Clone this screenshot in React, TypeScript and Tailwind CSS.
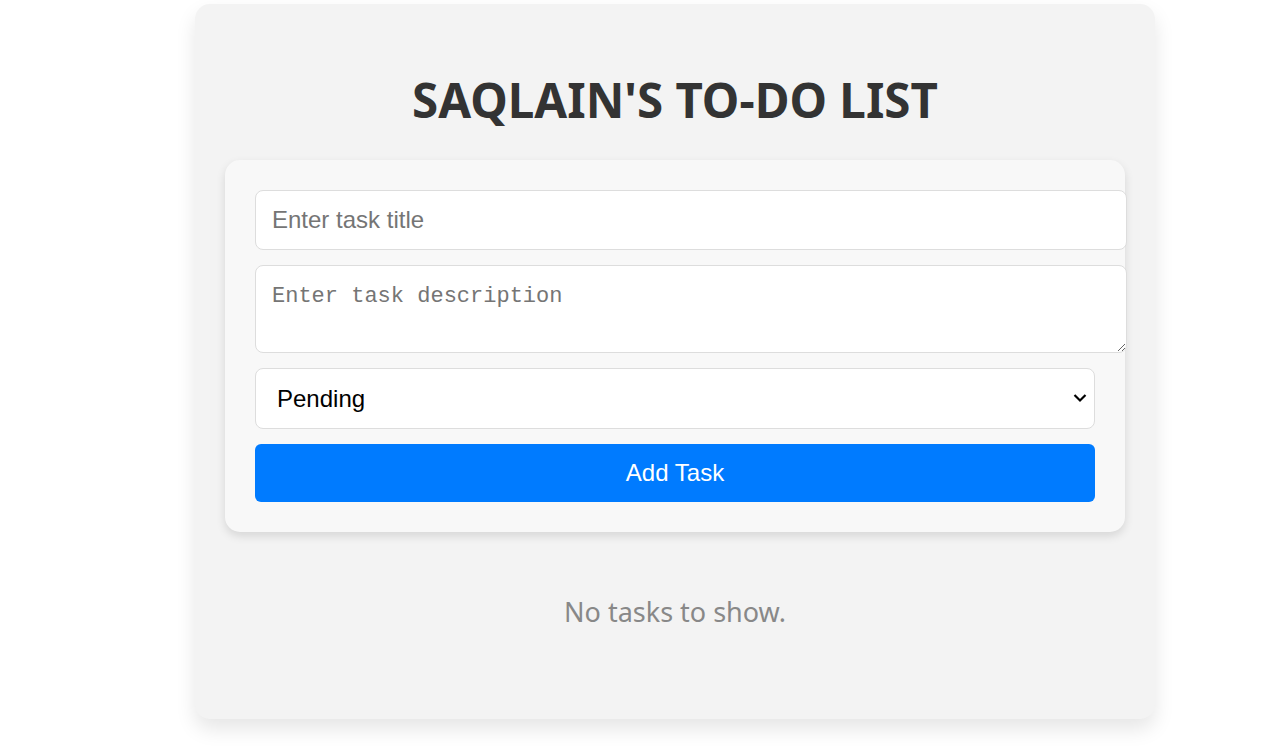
import { useState } from "react";

export default function App() {
  const [title, setTitle] = useState("");
  const [desc, setDesc] = useState("");
  const [status, setStatus] = useState("Pending");

  return (
    <div className="min-h-screen bg-white pt-[4px] pl-[195px]">
      <div className="w-[960px] rounded-[15px] bg-[#f3f3f3] px-[30px] pt-[30px] pb-[30px] shadow-[0_10px_20px_rgba(0,0,0,0.1)]">
        {/* Heading */}
        <div className="flex h-[126px] items-center justify-center pt-[5px]">
          <h1 className="font-['Noto_Sans',sans-serif] text-[47.5px] font-bold leading-none text-[#333]">
            SAQLAIN'S TO-DO LIST
          </h1>
        </div>

        {/* Form */}
        <div className="flex flex-col gap-[15px] rounded-[15px] bg-[#f8f8f8] p-[30px] shadow-[0_4px_10px_rgba(0,0,0,0.12)]">
          <input
            value={title}
            onChange={(e) => setTitle(e.target.value)}
            placeholder="Enter task title"
            className="h-[60px] w-[872px] rounded-[8px] border border-[#dddddd] bg-white px-[16px] font-['Liberation_Sans',Arial,sans-serif] text-[24px] text-black outline-none placeholder:text-[#757575]"
          />
          <textarea
            value={desc}
            onChange={(e) => setDesc(e.target.value)}
            placeholder="Enter task description"
            className="h-[88px] w-[872px] rounded-[8px] border border-[#dddddd] bg-white px-[16px] pt-[18px] font-['Liberation_Mono',monospace] text-[22px] leading-[26px] text-black outline-none placeholder:text-[#757575]"
          />
          <div className="relative w-[840px]">
            <select
              value={status}
              onChange={(e) => setStatus(e.target.value)}
              className="h-[61px] w-full appearance-none rounded-[8px] border border-[#dddddd] bg-white pl-[21px] font-['Liberation_Sans',Arial,sans-serif] text-[24px] text-black outline-none"
            >
              <option>Pending</option>
              <option>In Progress</option>
              <option>Completed</option>
            </select>
            <svg
              className="pointer-events-none absolute right-[8px] top-[25px]"
              width="14"
              height="10"
              viewBox="0 0 14 10"
              fill="none"
            >
              <path d="M1.5 2l5.5 5.5L12.5 2" stroke="#000" strokeWidth="2.2" />
            </svg>
          </div>
          <button className="h-[58px] w-[840px] rounded-[6px] bg-[#007bff] font-['Liberation_Sans',Arial,sans-serif] text-[24px] text-white">
            Add Task
          </button>
        </div>

        {/* Empty state */}
        <div className="flex h-[157px] items-center justify-center pt-[4px]">
          <p className="font-['Noto_Sans',sans-serif] text-[27px] text-[#888]">No tasks to show.</p>
        </div>
      </div>
    </div>
  );
}
